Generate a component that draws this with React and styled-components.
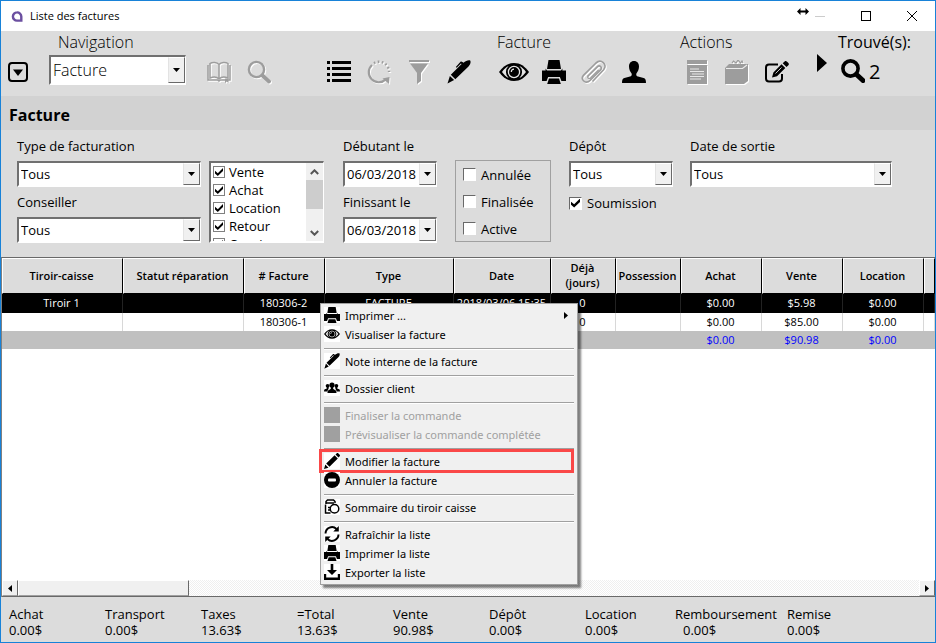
import React, { useId } from "react";
import styled, { createGlobalStyle, css } from "styled-components";

const GlobalStyle = createGlobalStyle`
  * {
    box-sizing: border-box;
  }
  body {
    margin: 0;
    font-family: "Open Sans", "Noto Sans", sans-serif;
    font-size: 13px;
    color: #000;
    background: #dcdcdc;
  }
  button, input, select {
    font: inherit;
    color: inherit;
    margin: 0;
    padding: 0;
    border: none;
    background: transparent;
  }
`;

const Window = styled.div`
  display: flex;
  flex-direction: column;
  min-height: 100vh;
  border: 1px solid #1882d8;
  background: #dcdcdc;
  overflow: hidden;
`;

/* ---------- title bar ---------- */

const TitleBar = styled.header`
  display: flex;
  align-items: center;
  height: 30px;
  padding-left: 10px;
  gap: 7px;
  background: #fff;
`;

const WindowTitle = styled.h1`
  margin: 0;
  padding-bottom: 2px;
  flex: 1;
  font-size: 11px;
  font-weight: 400;
`;

const WindowButtons = styled.div`
  display: flex;
  align-items: center;
  padding-bottom: 1px;
`;

const WindowButton = styled.button`
  display: flex;
  justify-content: center;
  width: ${({ $narrow }) => ($narrow ? "12px" : "46px")};
  padding-bottom: ${({ $narrow }) => ($narrow ? "8px" : "0")};
  margin-right: ${({ $narrow }) => ($narrow ? "-12px" : "0")};
`;

/* ---------- toolbar ---------- */

const Toolbar = styled.div`
  display: flex;
  height: 65px;
`;

const Group = styled.div`
  display: flex;
  flex-direction: column;
  flex-shrink: 0;
  margin-left: ${({ $space = 0 }) => $space}px;
`;

const GroupLabel = styled.span`
  height: 23px;
  padding-left: ${({ $indent = 3 }) => $indent}px;
  font-size: 16px;
  line-height: 23px;
  font-weight: ${({ $regular }) => ($regular ? 400 : 300)};
  white-space: nowrap;
`;

const GroupRow = styled.div`
  display: flex;
  align-items: center;
  height: 36px;
`;

const IconButton = styled.button`
  display: flex;
  align-items: center;
  justify-content: center;
  width: ${({ $width = 40 }) => $width}px;
  height: 36px;
  color: #000;

  &:disabled {
    color: #9d9d9d;
    filter: drop-shadow(1px 1px 0 #fff);
  }
`;

const NextButton = styled.button`
  align-self: flex-start;
  margin: 23px 0 0 20px;
  width: 20px;
  text-align: left;
`;

const Found = styled.div`
  display: flex;
  align-items: center;
  gap: 4px;
  height: 36px;
  padding: 0 0 2px 4px;
  font-size: 20px;
`;

const SectionTitle = styled.h2`
  margin: 0;
  padding: 0 8px;
  height: 34px;
  line-height: 39px;
  font-size: 16px;
  font-weight: 700;
  background: #d2d2d2;
`;

/* ---------- form parts ---------- */

const Sunken = css`
  border: 2px solid;
  border-color: #707070 #fff #fff #707070;
  border-right-width: 1px;
  background: #fff;
`;

const Combo = styled.div`
  ${Sunken}
  display: flex;
  width: ${({ $tall }) => ($tall ? "137px" : "100%")};
  height: ${({ $tall }) => ($tall ? "30px" : "26px")};
  margin-bottom: ${({ $tall }) => ($tall ? "4px" : "0")};
  font-size: ${({ $tall }) => ($tall ? "16px" : "13px")};
  font-weight: ${({ $tall }) => ($tall ? 300 : 400)};

  select, input {
    flex: 1;
    min-width: 0;
    padding-left: 2px;
    appearance: none;
    outline: none;
  }
`;

const Arrow = styled.span`
  display: flex;
  align-items: center;
  justify-content: center;
  width: 17px;
  background: #f0f0f0;
  border: 1px solid;
  border-color: #fff #696969 #696969 #e3e3e3;
  pointer-events: none;
`;

const FieldBox = styled.div`
  display: flex;
  flex-direction: column;
  gap: 6px;

  label {
    height: 18px;
    line-height: 18px;
    white-space: nowrap;
  }
`;

const CheckLabel = styled.label`
  display: flex;
  align-items: center;
  gap: ${({ $gap = 5 }) => $gap}px;
  height: ${({ $height = 18 }) => $height}px;
  flex-shrink: 0;
`;

const CheckBox = styled.input.attrs({ type: "checkbox" })`
  appearance: none;
  position: relative;
  width: 13px;
  height: 13px;
  flex-shrink: 0;
  background: #fff;
  border: 1px solid;
  border-color: #696969 #fff #fff #696969;
  ${({ $flat }) => $flat && "width: 12px; height: 12px; border-color: #808080;"}

  &:checked::before {
    content: "";
    position: absolute;
    inset: 1px;
    background: #000;
    clip-path: polygon(0 35%, 35% 65%, 100% 0, 100% 38%, 35% 100%, 0 70%);
  }
`;

const Filters = styled.section`
  display: flex;
  height: 127px;
  padding: 7px 16px 14px;
`;

const FilterColumn = styled.div`
  display: flex;
  flex-direction: column;
  gap: 6px;
  width: ${({ $width }) => $width}px;
  margin-left: ${({ $space = 0 }) => $space}px;
`;

const ListBox = styled.div`
  ${Sunken}
  display: flex;
  height: 82px;
  margin-top: 24px;
  overflow: hidden;
`;

const ListItems = styled.div`
  flex: 1;
  padding-left: 2px;
`;

const ListScroll = styled.div`
  display: flex;
  flex-direction: column;
  width: 17px;
  background: #f0f0f0;
`;

const ScrollStep = styled.button`
  display: flex;
  align-items: center;
  justify-content: center;
  height: 17px;
`;

const ScrollThumb = styled.div`
  height: 29px;
  margin-bottom: auto;
  background: #cdcdcd;
`;

const StatusBox = styled.fieldset`
  display: flex;
  flex-direction: column;
  height: 82px;
  margin: 23px 0 0;
  padding: 0 7px;
  border: 1px solid #a0a0a0;
`;

/* ---------- table ---------- */

const TablePane = styled.main`
  position: relative;
  flex: 1;
  display: flex;
  flex-direction: column;
  border-top: 1px solid #696969;
  border-left: 1px solid #808080;
  background: #fff;
`;

const Table = styled.table`
  width: 100%;
  table-layout: fixed;
  border-collapse: separate;
  border-spacing: 0;
  font-size: 11px;
  margin-bottom: auto;
`;

const HeadCell = styled.th`
  height: 36px;
  padding: 0 3px 2px 1px;
  font-weight: 600;
  line-height: 15px;
  background: #dcdcdc;
  border: 1px solid;
  border-color: #fff #000 #000 #fff;
`;

const Cell = styled.td`
  height: 18px;
  padding: 0 1px 2px 0;
  line-height: 15px;
  font-weight: 500;
  text-align: center;
  white-space: nowrap;
  border-right: 1px solid #d8d8d8;
`;

const Row = styled.tr`
  ${({ $selected }) =>
    $selected &&
    css`
      color: #fff;
      background: #000;
      ${Cell} {
        height: 19px;
        border-color: #222;
      }
    `}
  ${({ $total }) =>
    $total &&
    css`
      color: #00f;
      background: #c0c0c0;
      ${Cell} {
        border-color: #c0c0c0;
      }
    `}
`;

const ScrollBar = styled.div`
  display: flex;
  height: 17px;
  border-bottom: 1px solid #696969;
  background: repeating-conic-gradient(#fff 0 25%, #efefef 0 50%) 0 0 / 2px 2px;
`;

const ScrollPart = styled.button`
  display: flex;
  align-items: center;
  justify-content: center;
  width: ${({ $width = 16 }) => $width}px;
  background: #f0f0f0;
  border: 1px solid;
  border-color: #fff #696969 #a0a0a0 #fff;
  ${({ $end }) => $end && "margin-left: auto;"}
`;

/* ---------- context menu ---------- */

const Menu = styled.div`
  position: absolute;
  top: 45px;
  left: 318px;
  width: 258px;
  padding: 2px 0;
  border: 1px solid #a0a0a0;
  background: #f0f0f0;
  box-shadow: 3px 3px 2px rgba(0, 0, 0, 0.5);
`;

const MenuItem = styled.button`
  position: relative;
  display: flex;
  align-items: center;
  gap: 5px;
  width: 100%;
  height: 19px;
  padding: 0 9px 0 3px;
  font-family: "Noto Sans", "Open Sans", sans-serif;
  font-size: 11px;
  text-align: left;
  white-space: nowrap;

  &:disabled {
    color: #a0a0a0;
  }

  ${({ $marked }) =>
    $marked &&
    css`
      &::after {
        content: "";
        position: absolute;
        inset: -3px 3px -2px -2px;
        border: 3px solid #fa4848;
      }
    `}
`;

const MenuIcon = styled.span`
  display: flex;
  width: 16px;
  height: 16px;
  margin-bottom: 2px;
  background: ${({ $blank }) => ($blank ? "#a0a0a0" : "#fff")};
`;

const MenuText = styled.span`
  flex: 1;
`;

const Separator = styled.hr`
  height: 2px;
  margin: 4px 3px 2px;
  border: none;
  border-top: 1px solid #a0a0a0;
  border-bottom: 1px solid #fff;
`;

/* ---------- footer ---------- */

const Totals = styled.footer`
  display: grid;
  grid-template-columns: repeat(6, 96px) 90px 112px 1fr;
  height: 45px;
  padding: 9px 8px 0;
  line-height: 16px;
`;

const TotalValue = styled.div`
  padding-left: ${({ $indent }) => ($indent ? "8px" : "0")};
`;

/* ---------- icons ---------- */

const Svg = ({ w, h = w, box, children }) => (
  <svg width={w} height={h} viewBox={box || `0 0 ${w} ${h}`} fill="currentColor" aria-hidden="true">
    {children}
  </svg>
);

const line = { fill: "none", stroke: "currentColor" };

const Down = () => (
  <Svg w={7} h={4}>
    <path d="M0 0h7L3.5 4z" />
  </Svg>
);

const Logo = () => (
  <Svg w={12} h={11}>
    <path d="M6 1.4a4.1 4.1 0 1 0 0 8.2h4.3V5.5A4.2 4.2 0 0 0 6 1.4z" fill="none" stroke="#6b4fa0" strokeWidth="2.4" />
  </Svg>
);

const MenuBox = () => (
  <Svg w={20}>
    <rect x="1" y="1" width="18" height="18" rx="3" {...line} strokeWidth="2" />
    <path d="M5 7.500h10L10 14z" />
  </Svg>
);

const Book = () => (
  <Svg w={24} h={22}>
    <path
      d="M12 3.500C10 1.200 5.500.8 3 2.500V17c3-1.200 7-1 9 1 2-2 6-2.200 9-1V2.500C18.500.8 14 1.200 12 3.500zV18M1 4v15h9.500l1.500 1 1.500-1H23V4"
      {...line}
      strokeWidth="1.500"
    />
    <path d="M18 17.500h3.500V22l-1.700-1.400L18 22z" />
  </Svg>
);

const Search = ({ thick = 2.4, w = 24 }) => (
  <Svg w={w} box="0 0 24 24">
    <circle cx="9.500" cy="9.500" r="7.600" {...line} strokeWidth={thick} />
    <path d="M15.500 15.500l6.500 6" {...line} strokeWidth={thick + 1.4} strokeLinecap="round" />
  </Svg>
);

const List = () => (
  <Svg w={24} h={22}>
    {[0, 6, 12, 18].map((y) => (
      <path key={y} d={`M0 ${y}h3v3H0zM5 ${y}h19v3H5z`} />
    ))}
  </Svg>
);

const Reload = () => (
  <Svg w={24}>
    <path d="M5 5A9.600 9.600 0 1 0 18.500 19.600" {...line} strokeWidth="2.2" />
    <path d="M15.500 18.500l7-1.500-.5 7z" />
    <path d="M7 3.200A9.800 9.800 0 0 1 22 12" {...line} strokeWidth="2.4" strokeDasharray="1.6 2.4" />
  </Svg>
);

const Funnel = () => (
  <Svg w={20} h={24}>
    <path d="M0 0h20v2H0zM1 3.500h18L12 13v8l-4 3V13z" />
  </Svg>
);

const Pen = ({ w = 24 }) => (
  <Svg w={w} box="0 0 24 24">
    <path d="M.5 23.500l2.400-7.600 4.200 4.200z" />
    <path d="M3.800 14.800L14.600 4l-.7-.6-4.200 4.300-.9-.8L13.300 2c.7-.7 1.400-.5 2.100.1l1.100.7C18.500 1 21.200-.1 23.200.5c.9 1.600.2 4-1.700 6L8.300 19.300z" />
  </Svg>
);

const Eye = ({ w = 30, h = 18 }) => (
  <Svg w={w} h={h} box="0 0 30 18">
    <path d="M0 9C4 3.300 9 0 15 0s11 3.300 15 9c-4 5.700-9 9-15 9S4 14.700 0 9z" />
    <path
      d="M3 9c1.800-2.600 4-4.700 6.600-5.900A8 8 0 0 0 9.600 15C7 13.700 4.800 11.600 3 9zM27 9c-1.800-2.600-4-4.700-6.600-5.900a8 8 0 0 1 0 11.900C23 13.700 25.200 11.600 27 9z"
      fill="#e4e4e4"
    />
    <circle cx="15" cy="9" r="5.600" fill="none" stroke="#e4e4e4" strokeWidth="1.300" />
    <path d="M12.300 9A2.800 2.800 0 0 1 15 6.200" fill="none" stroke="#e4e4e4" strokeWidth="1.200" />
  </Svg>
);

const Printer = ({ w = 24 }) => (
  <Svg w={w} box="0 0 24 24">
    <path d="M6.500 0h11L19 9H5zM0 10.500h3.600v-2L5 10.500h14l1.400-2v2H24V21h-4.600l-1.500-4H6.100l-1.500 4H0z" />
    <path d="M7 18.500h10l1.800 5.500H5.200z" />
  </Svg>
);

const Clip = () => (
  <Svg w={26} h={24}>
    <path
      d="M6.500 16.500L16.300 6.800c2.400-2.200 5.400.6 3.300 3L9 20.500c-4 4-10-.6-6.500-5.200L15 3c5-4.600 12 1.600 7.600 6.800L11.500 21.500"
      {...line}
      strokeWidth="1.700"
    />
    <path d="M7 16c-1 2 1 3.500 2.600 2l8-8" {...line} strokeWidth="1.300" />
  </Svg>
);

const User = () => (
  <Svg w={24} h={22}>
    <path d="M12 0c3.300 0 5 2.400 5 5.600 0 2.700-1.200 5.400-2.600 6.800-.5 1.800.2 2.600 1.600 3.100l5.600 1.600c1.800.7 2.400 1.700 2.400 4.900H0c0-3.200.6-4.200 2.400-4.900L8 15.500c1.400-.5 2.100-1.300 1.600-3.100C8.200 11 7 8.300 7 5.600 7 2.400 8.700 0 12 0z" />
  </Svg>
);

const Note = () => (
  <Svg w={20} h={24}>
    <path d="M0 0h20v4H0zM0 5h20v19H0z" />
    <path d="M3 9h9M3 11.500h14M5 14h12M3 16.500h14M3 19h11" fill="none" stroke="#e8e8e8" strokeWidth="1.200" />
  </Svg>
);

const Bag = () => (
  <Svg w={24}>
    <path d="M0 8l4-4h19v17l-4 3H0z" />
    <path d="M1 8.500h16.500L22 5" fill="none" stroke="#ececec" strokeWidth="1.200" />
    <path d="M7 3l1.500-2L11 3l2-3 2.500 3L17 1l1 2" {...line} strokeWidth="1.200" />
  </Svg>
);

const Edit = () => (
  <Svg w={24} h={22}>
    <path d="M13 3.500H4A3 3 0 0 0 1 6.500V17.500A3 3 0 0 0 4 20.500H14A3 3 0 0 0 17 17.500V13" {...line} strokeWidth="2" />
    <path d="M7 16.500l1.400-5L16.500 3.300l3.800 3.700L12 15.200zM17.700 2.200L19.600.5c.8-.7 1.500-.6 2.200 0l1.600 1.600c.6.700.6 1.500 0 2.200l-1.900 1.800z" />
    <path d="M10.500 12.500l6-6" stroke="#dcdcdc" strokeWidth=".9" />
  </Svg>
);

const People = () => (
  <Svg w={16}>
    <circle cx="8" cy="5" r="2.600" />
    <circle cx="3.600" cy="5.800" r="1.900" />
    <circle cx="12.400" cy="5.800" r="1.900" />
    <path d="M3.500 13c0-3 1.500-3 3.300-4V7h2.400v2c1.800 1 3.300 1 3.300 4zM0 11.600c0-2.400 1-2.300 2.800-3V7h1.800v1.800L3.200 11.600zM16 11.600c0-2.400-1-2.300-2.800-3V7h-1.800v1.800l1.400 2.800z" />
  </Svg>
);

const Pencil = () => (
  <Svg w={16}>
    <path d="M0 16l1.300-4.500 3.200 3.200zM2.200 10.500L10.600 2.300l3.200 3.200-8.300 8.300zM11.500 1.500L12.800.3c.5-.4 1-.4 1.400 0l1.500 1.500c.4.400.4 1 0 1.400l-1.200 1.300z" />
  </Svg>
);

const Minus = () => (
  <Svg w={16}>
    <circle cx="8" cy="8" r="8" />
    <rect x="4" y="6.500" width="8" height="3" rx="1" fill="#fff" />
  </Svg>
);

const Drawer = () => (
  <Svg w={16}>
    <path d="M2 5V2.500L3.500 1h6L11 2.500V4M2 4h8M1.500 5.500V14h5M4 8.500h2.500M4 11h2" {...line} strokeWidth="1.500" />
    <circle cx="10.500" cy="9.700" r="4.300" {...line} strokeWidth="1.500" />
  </Svg>
);

const Refresh = () => (
  <Svg w={16}>
    <path d="M1.500 7.500A6.500 6.500 0 0 1 12.500 3M14.500 8.500A6.500 6.500 0 0 1 3.500 13" {...line} strokeWidth="2" />
    <path d="M14.800 0v5.500H9.300zM1.200 16v-5.500h5.500z" />
  </Svg>
);

const Export = () => (
  <Svg w={16}>
    <path d="M6.700 0h2.600v6H13l-5 5-5-5h3.700zM0 10h2.200v3.500h11.600V10H16v6H0z" />
  </Svg>
);

const Chevron = ({ up }) => (
  <Svg w={9} h={6}>
    <path d={up ? "M.8 5l3.700-3.700L8.200 5" : "M.8 1l3.700 3.700L8.200 1"} fill="none" stroke="#555" strokeWidth="2" />
  </Svg>
);

const Triangle = ({ left, w = 4, h = 7 }) => (
  <Svg w={w} h={h}>
    <path d={left ? `M${w} 0v${h}L0 ${h / 2}z` : `M0 0v${h}L${w} ${h / 2}z`} />
  </Svg>
);

/* ---------- composed parts ---------- */

const SelectField = ({ label, value = "Tous" }) => {
  const id = useId();
  return (
    <FieldBox>
      <label htmlFor={id}>{label}</label>
      <Combo>
        <select id={id}>
          <option>{value}</option>
        </select>
        <Arrow>
          <Down />
        </Arrow>
      </Combo>
    </FieldBox>
  );
};

const DateField = ({ label, value }) => {
  const id = useId();
  return (
    <FieldBox>
      <label htmlFor={id}>{label}</label>
      <Combo>
        <input id={id} type="text" defaultValue={value} />
        <Arrow>
          <Down />
        </Arrow>
      </Combo>
    </FieldBox>
  );
};

const Check = ({ label, checked, flat, ...rest }) => (
  <CheckLabel {...rest}>
    <CheckBox defaultChecked={checked} $flat={flat} />
    {label}
  </CheckLabel>
);

const Tool = ({ label, icon, ...rest }) => (
  <IconButton type="button" aria-label={label} {...rest}>
    {icon}
  </IconButton>
);

const columns = [
  ["Tiroir-caisse", 121],
  ["Statut réparation", 121],
  ["# Facture", 81],
  ["Type", 129],
  ["Date", 97],
  ["Déjà (jours)", 65],
  ["Possession", 65],
  ["Achat", 81],
  ["Vente", 81],
  ["Location", 81],
  ["", undefined],
];

const rows = [
  ["Tiroir 1", "", "180306-2", "FACTURE", "2018/03/06 15:35", "0", "", "$0.00", "$5.98", "$0.00", ""],
  ["", "", "180306-1", "", "", "0", "", "$0.00", "$85.00", "$0.00", ""],
  ["", "", "", "", "", "", "", "$0.00", "$90.98", "$0.00", ""],
];

const menuGroups = [
  [
    { text: "Imprimer ...", icon: <Printer w={16} />, submenu: true },
    { text: "Visualiser la facture", icon: <Eye w={16} h={16} /> },
  ],
  [{ text: "Note interne de la facture", icon: <Pen w={16} /> }],
  [{ text: "Dossier client", icon: <People /> }],
  [
    { text: "Finaliser la commande", disabled: true },
    { text: "Prévisualiser la commande complétée", disabled: true },
  ],
  [
    { text: "Modifier la facture", icon: <Pencil />, marked: true },
    { text: "Annuler la facture", icon: <Minus /> },
  ],
  [{ text: "Sommaire du tiroir caisse", icon: <Drawer /> }],
  [
    { text: "Rafraîchir la liste", icon: <Refresh /> },
    { text: "Imprimer la liste", icon: <Printer w={16} /> },
    { text: "Exporter la liste", icon: <Export /> },
  ],
];

const totals = [
  ["Achat", "0.00$"],
  ["Transport", "0.00$"],
  ["Taxes", "13.63$"],
  ["=Total", "13.63$"],
  ["Vente", "90.98$"],
  ["Dépôt", "0.00$"],
  ["Location", "0.00$"],
  ["Remboursement", "0.00$"],
  ["Remise", "0.00$"],
];

const ContextMenu = () => (
  <Menu role="menu">
    {menuGroups.map((group, i) => (
      <React.Fragment key={i}>
        {i > 0 && <Separator />}
        {group.map((item) => (
          <MenuItem key={item.text} type="button" role="menuitem" disabled={item.disabled} $marked={item.marked}>
            <MenuIcon $blank={item.disabled}>{item.icon}</MenuIcon>
            <MenuText>{item.text}</MenuText>
            {item.submenu && <Triangle />}
          </MenuItem>
        ))}
      </React.Fragment>
    ))}
  </Menu>
);

const App = () => {
  return (
    <>
      <GlobalStyle />
      <Window>
        <TitleBar>
          <Logo />
          <WindowTitle>Liste des factures</WindowTitle>
          <WindowButtons>
            <WindowButton type="button" aria-label="Redimensionner" $narrow>
              <Svg w={12} h={7}>
                <path d="M0 3.500L3.500 0v2.500h5V0L12 3.500 8.500 7V4.500h-5V7z" />
              </Svg>
            </WindowButton>
            <WindowButton type="button" aria-label="Réduire">
              <Svg w={10}>
                <path d="M0 5.500h10" stroke="#ccc" />
              </Svg>
            </WindowButton>
            <WindowButton type="button" aria-label="Agrandir">
              <Svg w={10}>
                <rect x=".5" y=".5" width="9" height="9" {...line} />
              </Svg>
            </WindowButton>
            <WindowButton type="button" aria-label="Fermer">
              <Svg w={10}>
                <path d="M0 0l10 10M10 0L0 10" {...line} />
              </Svg>
            </WindowButton>
          </WindowButtons>
        </TitleBar>

        <Toolbar>
          <Group>
            <GroupLabel />
            <Tool label="Menu" icon={<MenuBox />} $width={34} />
          </Group>
          <Group $space={14}>
            <GroupLabel $indent={9}>Navigation</GroupLabel>
            <GroupRow>
              <Combo $tall>
                <select aria-label="Navigation">
                  <option>Facture</option>
                </select>
                <Arrow>
                  <Down />
                </Arrow>
              </Combo>
            </GroupRow>
          </Group>
          <Group $space={13}>
            <GroupLabel />
            <GroupRow>
              <Tool label="Catalogue" icon={<Book />} disabled />
              <Tool label="Rechercher" icon={<Search />} disabled />
            </GroupRow>
          </Group>
          <Group $space={40}>
            <GroupLabel />
            <GroupRow>
              <Tool label="Liste" icon={<List />} />
              <Tool label="Rafraîchir" icon={<Reload />} disabled />
              <Tool label="Filtrer" icon={<Funnel />} disabled />
              <Tool label="Note" icon={<Pen />} />
            </GroupRow>
          </Group>
          <Group $space={15}>
            <GroupLabel>Facture</GroupLabel>
            <GroupRow>
              <Tool label="Visualiser" icon={<Eye />} />
              <Tool label="Imprimer" icon={<Printer />} />
              <Tool label="Pièces jointes" icon={<Clip />} disabled />
              <Tool label="Client" icon={<User />} />
            </GroupRow>
          </Group>
          <Group $space={23}>
            <GroupLabel>Actions</GroupLabel>
            <GroupRow>
              <Tool label="Commande" icon={<Note />} disabled />
              <Tool label="Sac" icon={<Bag />} disabled />
              <Tool label="Modifier" icon={<Edit />} />
            </GroupRow>
          </Group>
          <NextButton type="button" aria-label="Suivant">
            <Triangle w={10} h={18} />
          </NextButton>
          <Group>
            <GroupLabel $indent={1} $regular>
              Trouvé(s):
            </GroupLabel>
            <Found>
              <Search thick={3.6} />
              <span>2</span>
            </Found>
          </Group>
        </Toolbar>

        <SectionTitle>Facture</SectionTitle>

        <Filters>
          <FilterColumn $width={184}>
            <SelectField label="Type de facturation" />
            <SelectField label="Conseiller" />
          </FilterColumn>
          <FilterColumn $width={115} $space={8}>
            <ListBox>
              <ListItems>
                {["Vente", "Achat", "Location", "Retour", "Consigne"].map((name) => (
                  <Check key={name} label={name} checked flat $gap={4} />
                ))}
              </ListItems>
              <ListScroll>
                <ScrollStep type="button" aria-label="Monter">
                  <Chevron up />
                </ScrollStep>
                <ScrollThumb />
                <ScrollStep type="button" aria-label="Descendre">
                  <Chevron />
                </ScrollStep>
              </ListScroll>
            </ListBox>
          </FilterColumn>
          <FilterColumn $width={94} $space={19}>
            <DateField label="Débutant le" value="06/03/2018" />
            <DateField label="Finissant le" value="06/03/2018" />
          </FilterColumn>
          <FilterColumn $width={96} $space={18}>
            <StatusBox>
              <Check label="Annulée" $height={27} />
              <Check label="Finalisée" $height={27} />
              <Check label="Active" $height={27} />
            </StatusBox>
          </FilterColumn>
          <FilterColumn $width={104} $space={18}>
            <SelectField label="Dépôt" />
            <Check label="Soumission" checked $height={20} />
          </FilterColumn>
          <FilterColumn $width={202} $space={17}>
            <SelectField label="Date de sortie" />
          </FilterColumn>
        </Filters>

        <TablePane>
          <Table>
            <colgroup>
              {columns.map(([name, width]) => (
                <col key={name} width={width} />
              ))}
            </colgroup>
            <thead>
              <tr>
                {columns.map(([name]) => (
                  <HeadCell key={name}>{name}</HeadCell>
                ))}
              </tr>
            </thead>
            <tbody>
              {rows.map((cells, i) => (
                <Row key={i} $selected={i === 0} $total={i === 2}>
                  {cells.map((text, j) => (
                    <Cell key={j}>{text}</Cell>
                  ))}
                </Row>
              ))}
            </tbody>
          </Table>
          <ScrollBar>
            <ScrollPart type="button" aria-label="Défiler à gauche">
              <Triangle left />
            </ScrollPart>
            <ScrollPart as="div" $width={171} />
            <ScrollPart type="button" aria-label="Défiler à droite" $end>
              <Triangle />
            </ScrollPart>
          </ScrollBar>
          <ContextMenu />
        </TablePane>

        <Totals>
          {totals.map(([name, value]) => (
            <div key={name}>
              {name}
              <TotalValue $indent={name === "Remboursement"}>{value}</TotalValue>
            </div>
          ))}
        </Totals>
      </Window>
    </>
  );
};

export default App;
